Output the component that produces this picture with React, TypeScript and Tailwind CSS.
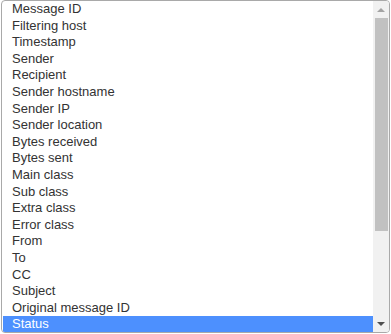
const items = [
  "Message ID",
  "Filtering host",
  "Timestamp",
  "Sender",
  "Recipient",
  "Sender hostname",
  "Sender IP",
  "Sender location",
  "Bytes received",
  "Bytes sent",
  "Main class",
  "Sub class",
  "Extra class",
  "Error class",
  "From",
  "To",
  "CC",
  "Subject",
  "Original message ID",
  "Status",
];

export default function App() {
  const selected = "Status";
  return (
    <div className="w-[391px] h-[334px] bg-white overflow-hidden" style={{ fontFamily: '"Liberation Sans", Arial, sans-serif' }}>
      <div className="ml-[1px] w-[389px] h-[333px] border border-[#a9a9a9] rounded-[4px] overflow-hidden flex bg-white">
        {/* options */}
        <div className="flex-1 pl-[1px]">
          {items.map((item) => (
            <div
              key={item}
              className={
                "h-[16.6px] leading-[16.6px] pl-[9px] text-[13px] whitespace-nowrap " +
                (item === selected ? "bg-[#4d90fe] text-white" : "text-[#333]")
              }
            >
              {item}
            </div>
          ))}
        </div>

        {/* scrollbar */}
        <div className="w-[16px] h-full bg-[#f1f1f1] flex flex-col items-center">
          <div className="h-[17px] w-full flex items-center justify-center">
            <svg width="8" height="4" viewBox="0 0 8 4">
              <polygon points="0,4 8,4 4,0" fill="#a3a3a3" />
            </svg>
          </div>
          <div className="w-[13px] h-[213px] bg-[#c1c1c1]" />
          <div className="flex-1" />
          <div className="h-[17px] w-full flex items-center justify-center">
            <svg width="8" height="4" viewBox="0 0 8 4">
              <polygon points="0,0 8,0 4,4" fill="#505050" />
            </svg>
          </div>
        </div>
      </div>
    </div>
  );
}
